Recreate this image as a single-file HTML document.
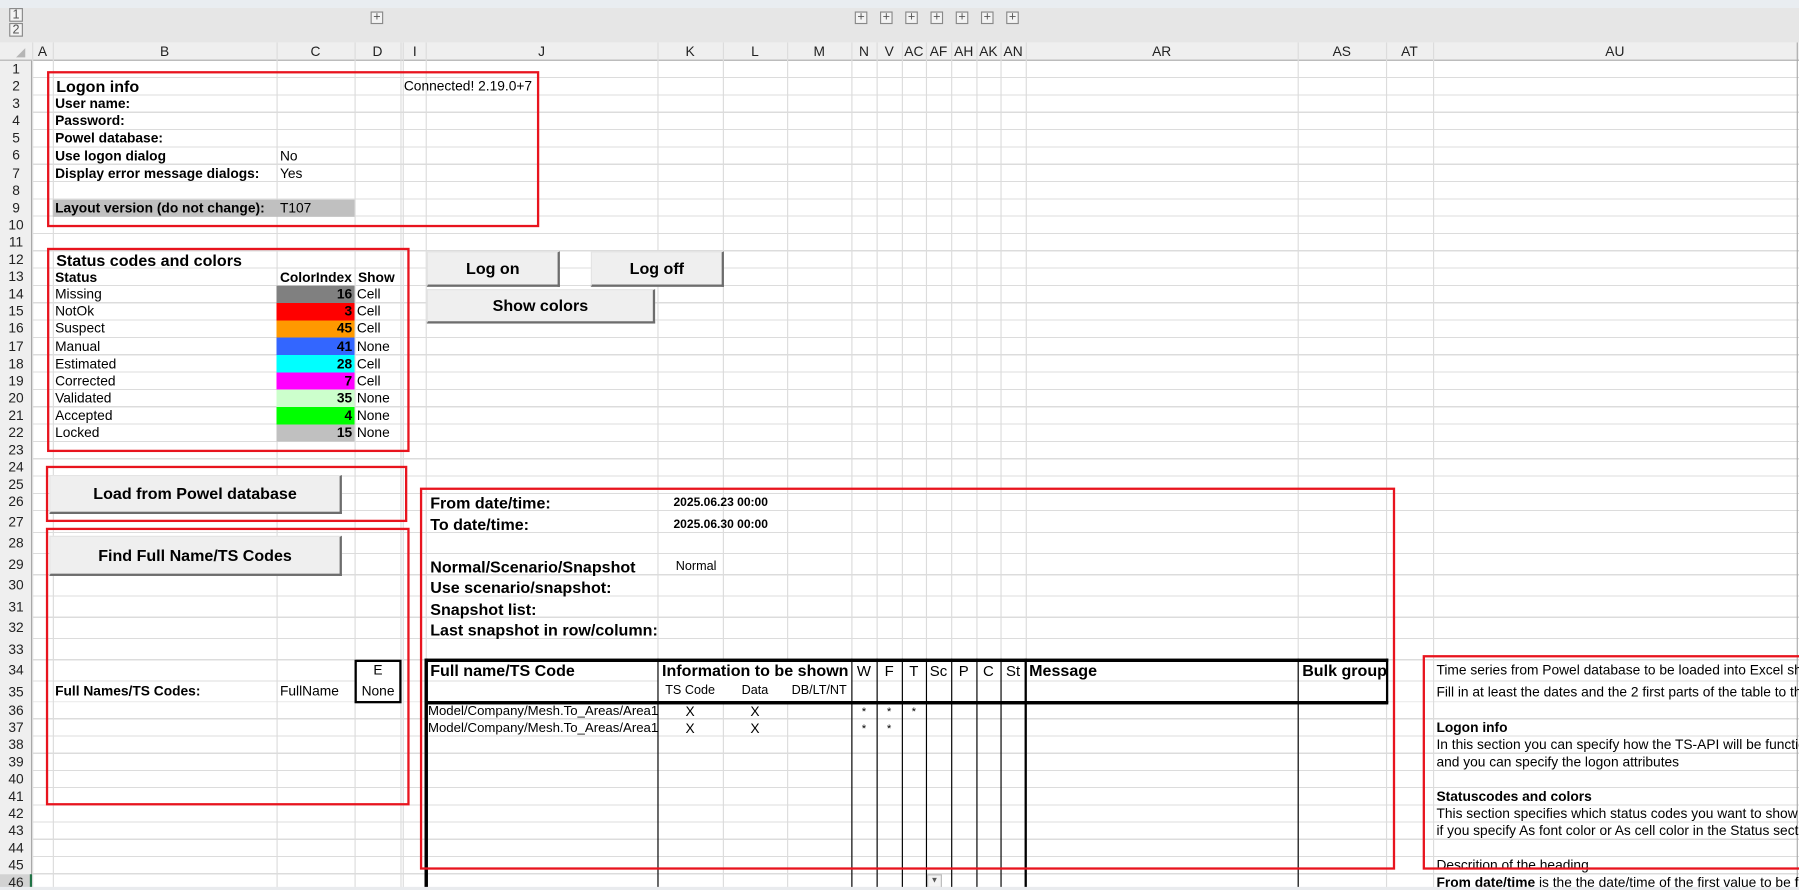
<!DOCTYPE html>
<html><head><meta charset="utf-8"><style>
html,body{margin:0;padding:0;width:1799px;height:890px;overflow:hidden;background:#fff}
#s{position:absolute;left:0;top:0;width:1568px;height:776px;transform:scale(1.14732);transform-origin:0 0;overflow:hidden;font-family:"Liberation Sans",Arial,sans-serif;color:#000;background:#fff}
#s div{position:absolute;box-sizing:border-box}
.t{white-space:nowrap;font-size:12px;line-height:15px}
.b{font-weight:bold}
.h{font-size:14px;font-weight:bold}
.vl{width:1px;background:#dcdcdc;top:37px;height:740px}
.bl{background:#000}
.red{border:2.5px solid #e8141e}
.btn{background:#efefef;border-top:1px solid #e4e4e4;border-left:1px solid #e4e4e4;border-right:2px solid #6d6d6d;border-bottom:2px solid #6d6d6d;font-weight:bold;font-size:14px;text-align:center}
.ch{top:37px;height:16px;font-size:12px;line-height:16px;text-align:center;color:#222}
.rn{left:0;width:28px;text-align:center;font-size:12px;color:#222}
.pl{width:11px;height:11px;border:1px solid #888;background:#f3f3f3;font-size:11px;line-height:9px;text-align:center;color:#555;top:10px}
.c{text-align:center}
.r{text-align:right}
</style></head><body><div id="s">
<div style="left:0;top:0;width:1568px;height:7px;background:#e9edf1"></div>
<div style="left:0;top:7px;width:1568px;height:30px;background:#e6e6e6"></div>
<div class="pl" style="left:8px;top:7px;width:12px;height:12px;line-height:11px">1</div>
<div class="pl" style="left:8px;top:20px;width:12px;height:12px;line-height:11px">2</div>
<div class="pl" style="left:323px">+</div>
<div class="pl" style="left:745px">+</div><div class="pl" style="left:767px">+</div><div class="pl" style="left:789px">+</div><div class="pl" style="left:811px">+</div><div class="pl" style="left:833px">+</div><div class="pl" style="left:855px">+</div><div class="pl" style="left:877px">+</div>
<div style="left:0;top:37px;width:1568px;height:16px;background:#efefef;border-bottom:1px solid #a9a9a9"></div>
<div style="left:0;top:53px;width:28px;height:724px;background:#efefef;border-right:1px solid #a9a9a9"></div>
<div style="left:0;top:762px;width:28px;height:15px;background:#d2d2d2;border-right:2px solid #217346"></div>
<div style="left:28px;top:53px;width:1540px;height:392.6px;background:repeating-linear-gradient(to bottom,transparent 0 14.1px,#dcdcdc 14.1px 15.1px)"></div>
<div style="left:28px;top:445.6px;width:1540px;height:166.5px;background:repeating-linear-gradient(to bottom,transparent 0 17.5px,#dcdcdc 17.5px 18.5px)"></div>
<div style="left:28px;top:612.1px;width:1540px;height:165px;background:repeating-linear-gradient(to bottom,transparent 0 14px,#dcdcdc 14px 15px)"></div>
<div class="vl" style="left:28px"></div><div class="vl" style="left:46px"></div><div class="vl" style="left:241px"></div><div class="vl" style="left:309px"></div><div class="vl" style="left:349px"></div><div class="vl" style="left:351px"></div><div class="vl" style="left:371px"></div><div class="vl" style="left:573px"></div><div class="vl" style="left:630px"></div><div class="vl" style="left:686px"></div><div class="vl" style="left:742px"></div><div class="vl" style="left:764px"></div><div class="vl" style="left:786px"></div><div class="vl" style="left:807px"></div><div class="vl" style="left:829px"></div><div class="vl" style="left:851px"></div><div class="vl" style="left:872px"></div><div class="vl" style="left:894px"></div><div class="vl" style="left:1131px"></div><div class="vl" style="left:1208px"></div><div class="vl" style="left:1249px"></div><div class="vl" style="left:1566px;background:#aaa"></div>
<div style="left:14px;top:42px;width:0;height:0;border-left:8px solid transparent;border-bottom:8px solid #b5b5b5"></div>
<div class="ch" style="left:28px;width:18px">A</div><div class="ch" style="left:46px;width:195px">B</div><div class="ch" style="left:241px;width:68px">C</div><div class="ch" style="left:309px;width:40px">D</div><div class="ch" style="left:352px;width:19px">I</div><div class="ch" style="left:371px;width:202px">J</div><div class="ch" style="left:573px;width:57px">K</div><div class="ch" style="left:630px;width:56px">L</div><div class="ch" style="left:686px;width:56px">M</div><div class="ch" style="left:742px;width:22px">N</div><div class="ch" style="left:764px;width:22px">V</div><div class="ch" style="left:786px;width:21px">AC</div><div class="ch" style="left:807px;width:22px">AF</div><div class="ch" style="left:829px;width:22px">AH</div><div class="ch" style="left:851px;width:21px">AK</div><div class="ch" style="left:872px;width:22px">AN</div><div class="ch" style="left:894px;width:237px">AR</div><div class="ch" style="left:1131px;width:77px">AS</div><div class="ch" style="left:1208px;width:41px">AT</div><div class="ch" style="left:1249px;width:317px">AU</div>
<div class="rn" style="top:53px;line-height:15.1px">1<br>2<br>3<br>4<br>5<br>6<br>7<br>8<br>9<br>10<br>11<br>12<br>13<br>14<br>15<br>16<br>17<br>18<br>19<br>20<br>21<br>22<br>23<br>24<br>25<br>26</div>
<div class="rn" style="top:445.6px;line-height:18.5px">27<br>28<br>29<br>30<br>31<br>32<br>33<br>34<br>35</div>
<div class="rn" style="top:612.1px;line-height:15px">36<br>37<br>38<br>39<br>40<br>41<br>42<br>43<br>44<br>45<br>46</div>
<div class="t h" style="left:49px;top:68px">Logon info</div>
<div class="t" style="left:352px;top:68px">Connected! 2.19.0+7</div>
<div class="t b" style="left:48px;top:83px">User name:</div>
<div class="t b" style="left:48px;top:98px">Password:</div>
<div class="t b" style="left:48px;top:113px">Powel database:</div>
<div class="t b" style="left:48px;top:128.5px">Use logon dialog</div><div class="t" style="left:244px;top:128.5px">No</div>
<div class="t b" style="left:48px;top:143.6px">Display error message dialogs:</div><div class="t" style="left:244px;top:143.6px">Yes</div>
<div style="left:46px;top:173.8px;width:263px;height:15.5px;background:#c0c0c0"></div>
<div class="t b" style="left:48px;top:174px">Layout version (do not change):</div><div class="t" style="left:244px;top:174px">T107</div>
<div class="t h" style="left:49px;top:220px">Status codes and colors</div>
<div class="t b" style="left:48px;top:234.5px">Status</div><div class="t b" style="left:244px;top:234.5px">ColorIndex</div><div class="t b" style="left:312px;top:234.5px">Show</div>
<div style="left:241px;top:249.3px;width:68px;height:151px;background:linear-gradient(to bottom,#808080 0 15.1px,#ff0000 15.1px 30.2px,#ff9900 30.2px 45.3px,#3366ff 45.3px 60.4px,#00ffff 60.4px 75.5px,#ff00ff 75.5px 90.6px,#ccffcc 90.6px 105.7px,#00ff00 105.7px 120.8px,#c0c0c0 120.8px 135.9px,transparent 135.9px)"></div>
<div class="t" style="left:48px;top:249.3px;line-height:15.1px">Missing<br>NotOk<br>Suspect<br>Manual<br>Estimated<br>Corrected<br>Validated<br>Accepted<br>Locked</div>
<div class="t b r" style="left:241px;width:66px;top:249.3px;line-height:15.1px">16<br>3<br>45<br>41<br>28<br>7<br>35<br>4<br>15</div>
<div class="t" style="left:311px;top:249.3px;line-height:15.1px">Cell<br>Cell<br>Cell<br>None<br>Cell<br>Cell<br>None<br>None<br>None</div>
<div class="btn" style="left:372px;top:219px;width:116px;height:31px;line-height:28px">Log on</div>
<div class="btn" style="left:515px;top:219px;width:116px;height:31px;line-height:28px">Log off</div>
<div class="btn" style="left:372px;top:252px;width:199px;height:30px;line-height:27px">Show colors</div>
<div class="btn" style="left:43px;top:414px;width:255px;height:34px;line-height:31px">Load from Powel database</div>
<div class="btn" style="left:43px;top:467px;width:255px;height:35px;line-height:32px">Find Full Name/TS Codes</div>
<div style="left:309px;top:575px;width:41px;height:38px;border:2px solid #000;background:#fff"></div>
<div class="t c" style="left:309px;width:41px;top:576px;line-height:17px">E</div>
<div class="t c" style="left:309px;width:41px;top:594px;line-height:17px">None</div>
<div class="t b" style="left:48px;top:595px">Full Names/TS Codes:</div>
<div class="t" style="left:244px;top:595px">FullName</div>
<div class="t h" style="left:375px;top:431px">From date/time:</div>
<div class="t b" style="left:587px;top:431px;font-size:10.5px">2025.06.23 00:00</div>
<div class="t h" style="left:375px;top:449.5px">To date/time:</div>
<div class="t b" style="left:587px;top:450px;font-size:10.5px">2025.06.30 00:00</div>
<div class="t h" style="left:375px;top:486.5px">Normal/Scenario/Snapshot</div><div class="t" style="left:589px;top:487px;font-size:11px">Normal</div>
<div class="t h" style="left:375px;top:505px">Use scenario/snapshot:</div>
<div class="t h" style="left:375px;top:523.5px">Snapshot list:</div>
<div class="t h" style="left:375px;top:542px">Last snapshot in row/column:</div>
<div style="left:574px;top:576px;width:168px;height:18px;background:#fff"></div>
<div style="left:574px;top:594px;width:168px;height:18px;background:#fff"></div>
<div class="bl" style="left:371px;top:574px;width:839px;height:2.5px"></div>
<div class="bl" style="left:371px;top:611px;width:839px;height:2.5px"></div>
<div class="bl" style="left:370px;top:574px;width:2.5px;height:203px"></div>
<div class="bl" style="left:1207.5px;top:574px;width:2.5px;height:39px"></div>
<div class="bl" style="left:573px;top:574px;width:1px;height:203px"></div>
<div class="bl" style="left:742px;top:574px;width:1px;height:203px"></div>
<div class="bl" style="left:764px;top:574px;width:1px;height:203px"></div>
<div class="bl" style="left:786px;top:574px;width:1px;height:203px"></div>
<div class="bl" style="left:807px;top:574px;width:1px;height:203px"></div>
<div class="bl" style="left:829px;top:574px;width:1px;height:203px"></div>
<div class="bl" style="left:851px;top:574px;width:1px;height:203px"></div>
<div class="bl" style="left:872px;top:574px;width:1px;height:203px"></div>
<div class="bl" style="left:893px;top:574px;width:2px;height:203px"></div>
<div class="bl" style="left:1131px;top:574px;width:1px;height:203px"></div>
<div class="t h" style="left:375px;top:576px;line-height:17px">Full name/TS Code</div>
<div class="t h" style="left:577px;top:576px;line-height:17px">Information to be shown</div>
<div class="t c" style="left:742px;width:22px;top:576px;line-height:17px;font-size:13px">W</div>
<div class="t c" style="left:764px;width:22px;top:576px;line-height:17px;font-size:13px">F</div>
<div class="t c" style="left:786px;width:21px;top:576px;line-height:17px;font-size:13px">T</div>
<div class="t c" style="left:807px;width:22px;top:576px;line-height:17px;font-size:13px">Sc</div>
<div class="t c" style="left:829px;width:22px;top:576px;line-height:17px;font-size:13px">P</div>
<div class="t c" style="left:851px;width:21px;top:576px;line-height:17px;font-size:13px">C</div>
<div class="t c" style="left:872px;width:22px;top:576px;line-height:17px;font-size:13px">St</div>
<div class="t h" style="left:897px;top:576px;line-height:17px">Message</div>
<div class="t h" style="left:1135px;top:576px;line-height:17px">Bulk group</div>
<div class="t c" style="left:573px;width:57px;top:595px;font-size:11px">TS Code</div>
<div class="t c" style="left:630px;width:56px;top:595px;font-size:11px">Data</div>
<div class="t c" style="left:686px;width:56px;top:595px;font-size:11px">DB/LT/NT</div>
<div class="t" style="left:373px;top:613px;font-size:11.5px">Model/Company/Mesh.To_Areas/Area1</div>
<div class="t" style="left:373px;top:628px;font-size:11.5px">Model/Company/Mesh.To_Areas/Area1</div>
<div class="t c" style="left:573px;width:57px;top:613px">X</div><div class="t c" style="left:630px;width:56px;top:613px">X</div>
<div class="t c" style="left:573px;width:57px;top:628px">X</div><div class="t c" style="left:630px;width:56px;top:628px">X</div>
<div class="t c" style="left:742px;width:22px;top:613px;font-size:10px">*</div><div class="t c" style="left:764px;width:22px;top:613px;font-size:10px">*</div><div class="t c" style="left:786px;width:21px;top:613px;font-size:10px">*</div>
<div class="t c" style="left:742px;width:22px;top:628px;font-size:10px">*</div><div class="t c" style="left:764px;width:22px;top:628px;font-size:10px">*</div>
<div style="left:808px;top:762px;width:13px;height:12px;border:1px solid #bbb;background:#f4f4f4;font-size:7px;line-height:10px;text-align:center;color:#555">▼</div>
<div class="t" style="left:1252px;top:575.1px;line-height:18.5px">Time series from Powel database to be loaded into Excel sheet and stored back<br>Fill in at least the dates and the 2 first parts of the table to the left</div>
<div class="t" style="left:1252px;top:627.1px;line-height:15px"><b>Logon info</b><br>In this section you can specify how the TS-API will be functioning<br>and you can specify the logon attributes<br>&nbsp;<br><b>Statuscodes and colors</b><br>This section specifies which status codes you want to show and how<br>if you specify As font color or As cell color in the Status section<br>&nbsp;<br>Descrition of the heading<br><b>From date/time</b> is the the date/time of the first value to be fetched</div>
<div class="red" style="left:41px;top:62px;width:429px;height:136px"></div>
<div class="red" style="left:41px;top:216px;width:316px;height:178px"></div>
<div class="red" style="left:40px;top:406px;width:315px;height:49px"></div>
<div class="red" style="left:40px;top:460px;width:317px;height:242px"></div>
<div class="red" style="left:366px;top:425px;width:850px;height:333px"></div>
<div class="red" style="left:1240px;top:571px;width:340px;height:187px"></div>
<div style="left:0;top:773px;width:1568px;height:3px;background:#e9ebee"></div>
</div></body></html>
